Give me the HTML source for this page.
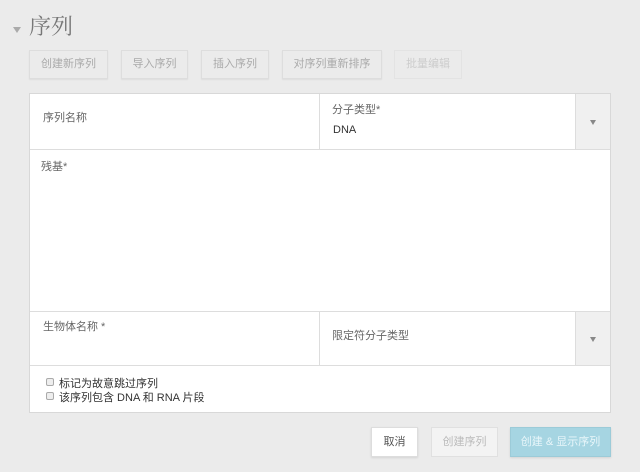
<!DOCTYPE html>
<html><head><meta charset="utf-8"><style>
*{box-sizing:border-box;margin:0;padding:0}
body{width:640px;height:472px;background:#ebebeb;font-family:"Liberation Sans","Noto Sans CJK SC",sans-serif;position:relative;overflow:hidden;color:#555}
.a{position:absolute}
.tb{position:absolute;top:50px;height:29px;border:1px solid #ddd;background:#ebebeb;color:#aaa;font-size:11px;line-height:27px;text-align:center;box-shadow:0 1px 1px rgba(0,0,0,.06)}
.panel{position:absolute;left:29px;top:93px;width:582px;height:320px;background:#fff;border:1px solid #d8d8d8}
.l{position:absolute;background:#ddd}
.lab{position:absolute;font-size:11px;color:#666}
.arr{position:absolute;width:35px;background:#f0f0f0;border-left:1px solid #ddd}
.arr:after{content:"";position:absolute;left:14px;top:50%;margin-top:-2px;border-left:3.5px solid transparent;border-right:3.5px solid transparent;border-top:5px solid #888}
.cb{position:absolute;width:8px;height:8px;border:1px solid #aaa;border-radius:2px;background:#eee}
.bb{position:absolute;top:427px;height:30px;font-size:11px;line-height:28px;text-align:center;box-shadow:0 1px 2px rgba(0,0,0,.1)}
</style></head><body>
<div class="a" style="left:13px;top:27px;border-left:4px solid transparent;border-right:4px solid transparent;border-top:6px solid #aaa"></div>
<div class="a" style="left:29px;top:10px;font-size:22px;color:#777;font-family:'Noto Serif CJK SC',serif">序列</div>
<div class="tb" style="left:29px;width:79px">创建新序列</div>
<div class="tb" style="left:121px;width:67px">导入序列</div>
<div class="tb" style="left:201px;width:68px">插入序列</div>
<div class="tb" style="left:282px;width:100px">对序列重新排序</div>
<div class="tb" style="left:394px;width:68px;color:#ccc;border-color:#e3e3e3;box-shadow:none">批量编辑</div>
<div class="panel">
<div class="l" style="left:0;right:0;top:55px;height:1px"></div>
<div class="l" style="left:0;right:0;top:217px;height:1px"></div>
<div class="l" style="left:0;right:0;top:271px;height:1px"></div>
<div class="l" style="left:289px;top:0;width:1px;height:55px"></div>
<div class="l" style="left:289px;top:217px;width:1px;height:54px"></div>
<div class="arr" style="left:545px;top:0;height:55px"></div>
<div class="arr" style="left:545px;top:218px;height:53px"></div>
<div class="lab" style="left:13px;top:15px">序列名称</div>
<div class="lab" style="left:302px;top:7px">分子类型*</div>
<div class="lab" style="left:303px;top:30px;color:#333;font-size:11px">DNA</div>
<div class="lab" style="left:11px;top:64px">残基*</div>
<div class="lab" style="left:13px;top:224px">生物体名称 *</div>
<div class="lab" style="left:302px;top:233px">限定符分子类型</div>
<div class="cb" style="left:16px;top:284px"></div>
<div class="lab" style="left:29px;top:281px;color:#333">标记为故意跳过序列</div>
<div class="cb" style="left:16px;top:298px"></div>
<div class="lab" style="left:29px;top:295px;color:#333">该序列包含 DNA 和 RNA 片段</div>
</div>
<div class="bb" style="left:371px;width:47px;background:#fff;border:1px solid #ddd;color:#555">取消</div>
<div class="bb" style="left:431px;width:67px;background:#f3f3f3;border:1px solid #e0e0e0;color:#bbb;box-shadow:none">创建序列</div>
<div class="bb" style="left:510px;width:101px;background:#a6d5e2;border:1px solid #9ccbd8;color:#e8f6fa">创建 &amp; 显示序列</div>
</body></html>
